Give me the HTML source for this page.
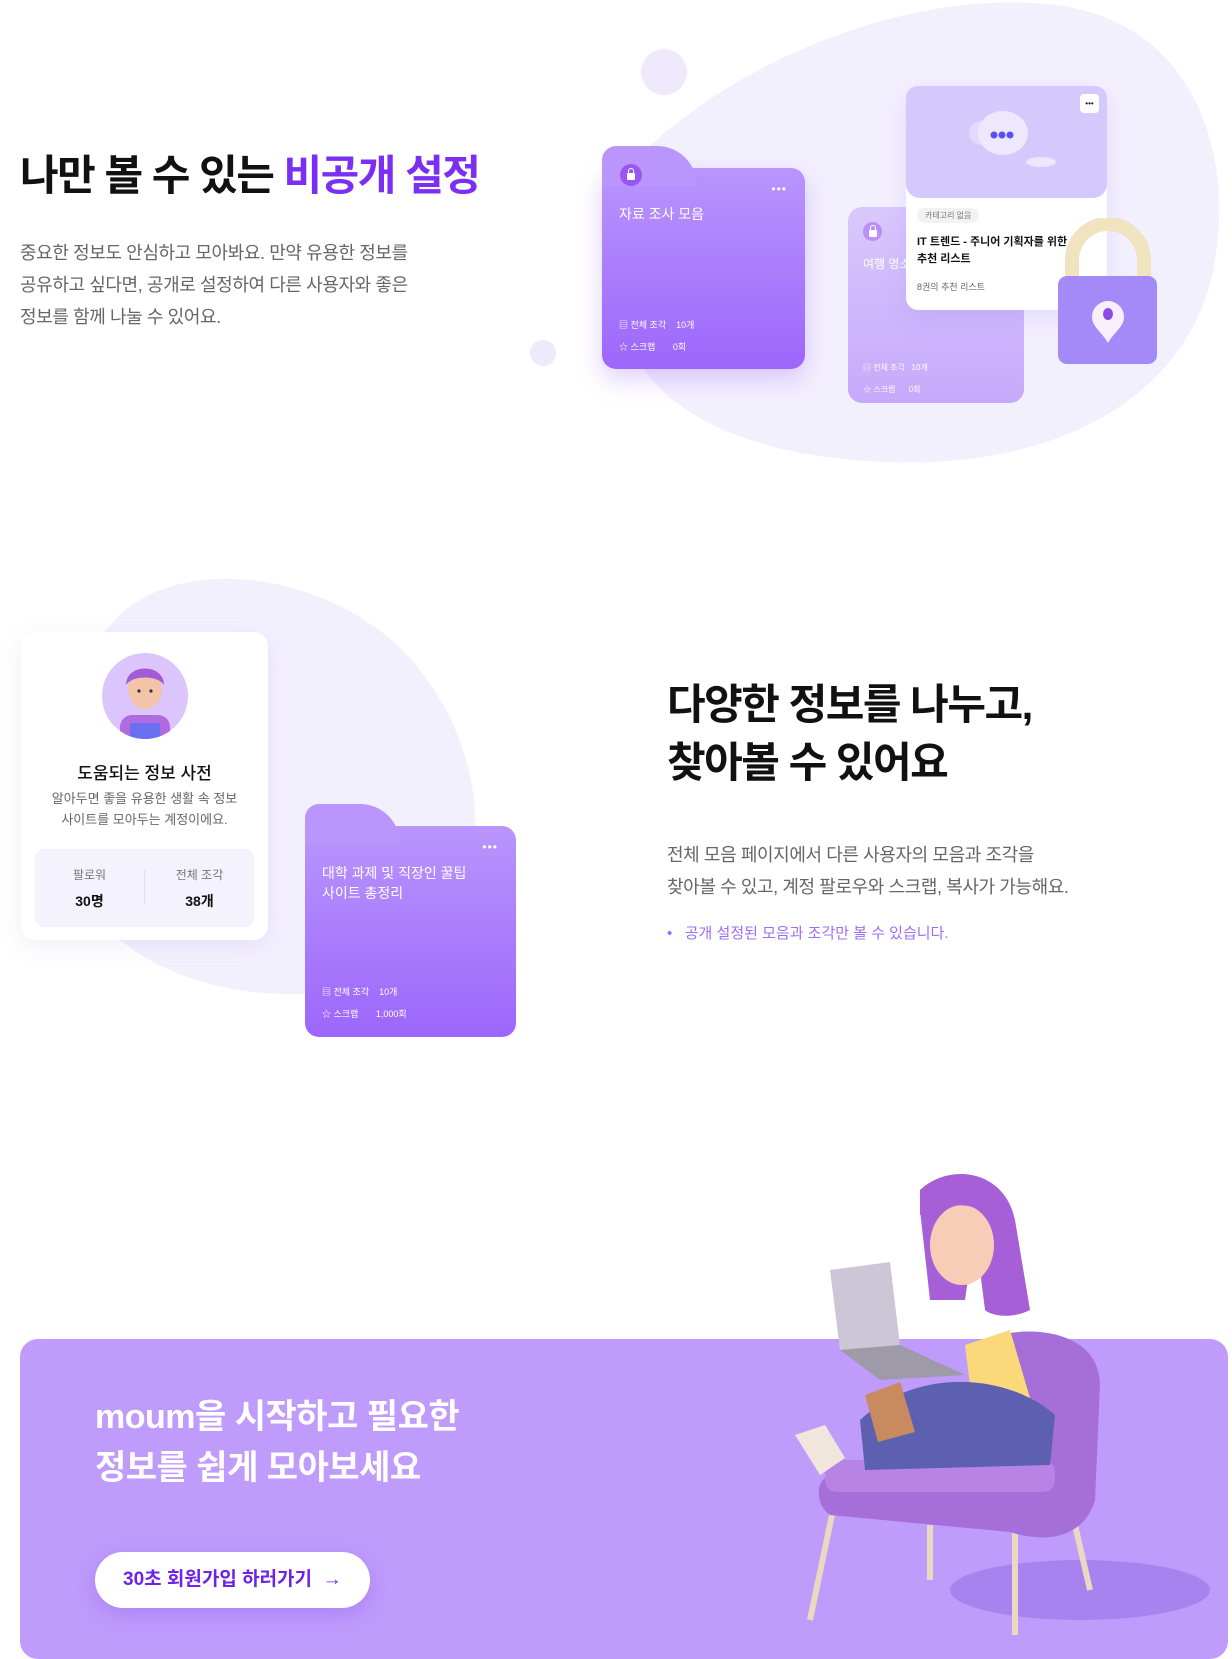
<!DOCTYPE html>
<html><head><meta charset="utf-8"><style>
*{margin:0;padding:0;box-sizing:border-box}
body{width:1232px;height:1645px;position:relative;overflow:hidden;background:#fff;font-family:"Liberation Sans","Noto Sans CJK KR",sans-serif;color:#111}
.a{position:absolute}
.h1{font-size:42px;font-weight:700;letter-spacing:-1.5px;line-height:58px}
.p{font-size:18px;color:#666;line-height:32px;letter-spacing:-0.4px}
.folder{position:absolute;border-radius:14px;background:linear-gradient(180deg,#b995fc,#9d66fb);color:#fff}
.folder .tab{position:absolute;left:0;top:-22px;width:95px;height:40px;border-radius:14px 14px 0 0;background:#b995fc}
.lock{position:absolute;width:22px;height:22px;border-radius:50%;background:#9a55f5;display:flex;align-items:center;justify-content:center}
.lock i{width:8px;height:7px;background:#fff;border-radius:1px;position:relative;margin-top:3px}
.lock i:before{content:"";position:absolute;left:1px;top:-5px;width:4px;height:5px;border:1.5px solid #fff;border-bottom:none;border-radius:3px 3px 0 0}
.meta{font-size:10px;line-height:22px}
</style></head><body>
<!-- top blob -->
<svg class="a" style="left:0;top:0" width="1232" height="470"><path d="M645 150 C765 40 935 -10 1055 5 C1185 20 1235 140 1215 260 C1195 390 1065 470 885 462 C765 457 655 422 625 332 C605 262 595 200 645 150Z" fill="#f3f0fe"/><circle cx="664" cy="72" r="23" fill="#efe9fd"/><circle cx="543" cy="353" r="13" fill="#efe9fd"/></svg>
<div class="a h1" style="left:20px;top:147px">나만 볼 수 있는 <span style="color:#7b2ff2">비공개 설정</span></div>
<div class="a p" style="left:20px;top:237px">중요한 정보도 안심하고 모아봐요. 만약 유용한 정보를<br>공유하고 싶다면, 공개로 설정하여 다른 사용자와 좋은<br>정보를 함께 나눌 수 있어요.</div>

<!-- back folder -->
<div class="folder" style="left:848px;top:207px;width:176px;height:196px;background:linear-gradient(180deg,#d8c6fd,#c4a6fb);opacity:.95">
<div class="lock" style="left:15px;top:15px;width:19px;height:19px;background:#b68af8"><i></i></div>
<div class="a" style="left:15px;top:48px;font-size:12px">여행 명소</div>
<div class="a meta" style="left:15px;top:150px;font-size:8px">▤ 전체 조각 &nbsp; 10개<br>☆ 스크랩 &nbsp;&nbsp;&nbsp;&nbsp; 0회</div></div>
<!-- front folder -->
<div class="folder" style="left:602px;top:168px;width:203px;height:201px;box-shadow:0 10px 25px rgba(150,100,250,.3)">
<div class="tab" style="top:-22px;width:95px;border-radius:14px 40px 0 0"></div>
<div class="lock" style="left:18px;top:-4px"><i></i></div>
<div class="a" style="right:18px;top:14px;font-size:12px;letter-spacing:1px">•••</div>
<div class="a" style="left:17px;top:36px;font-size:14px">자료 조사 모음</div>
<div class="a meta" style="left:17px;top:146px;font-size:9px">▤ 전체 조각 &nbsp;&nbsp; 10개<br>☆ 스크랩 &nbsp;&nbsp;&nbsp;&nbsp;&nbsp; 0회</div></div>
<!-- white card -->
<div class="a" style="left:906px;top:86px;width:201px;height:224px;background:#fff;border-radius:12px;box-shadow:0 8px 24px rgba(140,100,240,.15)">
<div style="height:112px;background:#d5c8fd;border-radius:12px 12px 14px 14px;position:relative">
<div class="a" style="right:8px;top:8px;width:19px;height:19px;background:#fff;border-radius:4px;font-size:8px;text-align:center;line-height:19px">•••</div>
<svg class="a" style="left:60px;top:25px" width="95" height="65"><ellipse cx="15" cy="22" rx="12" ry="12" fill="#e3dafe"/><ellipse cx="37" cy="22" rx="25" ry="22" fill="#eee8ff"/><circle cx="28" cy="24" r="3.5" fill="#5a4ef5"/><circle cx="36" cy="24" r="3.5" fill="#5a4ef5"/><circle cx="44" cy="24" r="3.5" fill="#5a4ef5"/><ellipse cx="75" cy="51" rx="15" ry="5" fill="#ece6ff"/></svg></div>
<div class="a" style="left:11px;top:122px;background:#f2f2f2;border-radius:10px;padding:2px 8px;font-size:8px;color:#777">카테고리 없음</div>
<div class="a" style="left:11px;top:148px;font-size:11px;line-height:17px;font-weight:600">IT 트렌드 - 주니어 기획자를 위한 도<br>추천 리스트</div>
<div class="a" style="left:11px;top:194px;font-size:9px;color:#666">8권의 추천 리스트</div></div>
<!-- padlock -->
<svg class="a" style="left:1053px;top:218px" width="110" height="150"><path d="M19 74 V42 A36 36 0 0 1 91 42 V74" fill="none" stroke="#f0e3bf" stroke-width="14"/><rect x="5" y="58" width="99" height="88" rx="9" fill="#a48af9"/><path d="M55 83 a16 16 0 0 1 16 16 c0 10-10 15-16 26 c-6-11-16-16-16-26 a16 16 0 0 1 16-16z" fill="#f8eefc"/><ellipse cx="55" cy="96" rx="5" ry="6" fill="#8a4ce8"/></svg>

<!-- middle blob -->
<svg class="a" style="left:0;top:570px" width="520" height="450"><path d="M125 40 C200 -20 350 10 420 100 C490 190 490 300 440 370 C390 430 260 440 170 400 C90 365 55 300 55 225 C55 150 75 85 125 40Z" fill="#f3f0fe"/></svg>
<div class="a" style="left:21px;top:632px;width:247px;height:308px;background:#fff;border-radius:14px;box-shadow:0 6px 24px rgba(120,100,200,.1)">
<div class="a" style="left:81px;top:21px;width:86px;height:86px;border-radius:50%;background:#dcc5fd;overflow:hidden">
<svg width="86" height="86"><rect x="18" y="62" width="50" height="30" rx="12" fill="#b06be0"/><rect x="28" y="70" width="30" height="20" fill="#6a6ef0"/><ellipse cx="43" cy="36" rx="17" ry="20" fill="#f3c4a8"/><path d="M24 32 C24 10 62 10 62 32 C56 22 30 22 24 32Z" fill="#a25bd8"/><circle cx="37" cy="38" r="1.6" fill="#333"/><circle cx="49" cy="38" r="1.6" fill="#333"/></svg></div>
<div class="a" style="left:0;width:247px;top:127px;text-align:center;font-size:17px;font-weight:500">도움되는 정보 사전</div>
<div class="a" style="left:0;width:247px;top:156px;text-align:center;font-size:13px;color:#666;line-height:21px">알아두면 좋을 유용한 생활 속 정보<br>사이트를 모아두는 계정이에요.</div>
<div class="a" style="left:14px;top:217px;width:219px;height:78px;background:#f4f2fc;border-radius:9px">
<div class="a" style="left:109px;top:21px;width:1px;height:35px;background:#e2def0"></div>
<div class="a" style="left:0;width:109px;top:17px;text-align:center;font-size:12px;color:#777">팔로워</div>
<div class="a" style="left:0;width:109px;top:42px;text-align:center;font-size:14px;font-weight:700">30명</div>
<div class="a" style="left:110px;width:109px;top:17px;text-align:center;font-size:12px;color:#777">전체 조각</div>
<div class="a" style="left:110px;width:109px;top:42px;text-align:center;font-size:14px;font-weight:700">38개</div></div></div>
<div class="folder" style="left:305px;top:826px;width:211px;height:211px">
<div class="tab" style="width:95px;border-radius:14px 40px 0 0;top:-22px"></div>
<div class="a" style="right:18px;top:14px;font-size:12px;letter-spacing:1px">•••</div>
<div class="a" style="left:17px;top:37px;font-size:14px;line-height:20px">대학 과제 및 직장인 꿀팁<br>사이트 총정리</div>
<div class="a meta" style="left:17px;top:155px;font-size:9px">▤ 전체 조각 &nbsp;&nbsp; 10개<br>☆ 스크랩 &nbsp;&nbsp;&nbsp;&nbsp;&nbsp; 1,000회</div></div>
<div class="a h1" style="left:667px;top:676px">다양한 정보를 나누고,<br>찾아볼 수 있어요</div>
<div class="a p" style="left:667px;top:839px">전체 모음 페이지에서 다른 사용자의 모음과 조각을<br>찾아볼 수 있고, 계정 팔로우와 스크랩, 복사가 가능해요.</div>
<div class="a" style="left:667px;top:922px;font-size:15px;color:#a06cf5">•&nbsp;&nbsp; 공개 설정된 모음과 조각만 볼 수 있습니다.</div>

<!-- banner -->
<div class="a" style="left:20px;top:1339px;width:1208px;height:320px;background:#bf9bfc;border-radius:18px"></div>
<div class="a" style="left:95px;top:1392px;font-size:34px;font-weight:700;color:#fff;line-height:51px;letter-spacing:-0.5px">moum을 시작하고 필요한<br>정보를 쉽게 모아보세요</div>
<div class="a" style="left:95px;top:1552px;width:275px;height:56px;background:#fff;border-radius:28px;box-shadow:0 6px 20px rgba(120,60,230,.25);color:#6d24e6;font-size:19px;font-weight:700;line-height:56px;padding-left:28px">30초 회원가입 하러가기 &nbsp;→</div>
<!-- illustration -->
<svg class="a" style="left:770px;top:1170px" width="460" height="475">
<ellipse cx="310" cy="420" rx="130" ry="30" fill="#9a72e6" opacity=".6"/>
<path d="M40 450 L62 345 M245 465 L245 355 M160 410 L160 355 M320 420 L305 355" stroke="#ead9c0" stroke-width="6"/>
<path d="M230 165 C270 155 330 165 330 215 L325 330 C315 365 280 375 240 362 L60 345 C45 335 45 310 60 305 L200 295 Z" fill="#a66ed9"/>
<rect x="55" y="290" width="230" height="32" rx="12" fill="#b784e6"/>
<path d="M195 175 L240 160 L265 245 L205 255Z" fill="#fbd97a"/>
<path d="M90 250 C150 195 240 205 285 245 L280 295 L95 300 Z" fill="#5d5fb0"/>
<path d="M25 265 L50 305 L75 288 L55 255Z" fill="#f0e6dc"/>
<path d="M95 225 L130 212 L145 262 L108 272Z" fill="#c88b5f"/>
<path d="M150 20 C180 -8 235 0 245 50 L260 140 C240 150 220 145 215 140 L205 60 L195 130 L160 130 L150 40Z" fill="#a65fd6"/>
<ellipse cx="192" cy="75" rx="32" ry="40" fill="#f7cdb8"/>
<path d="M150 40 C170 0 250 10 240 60 C220 30 170 30 150 45Z" fill="#a65fd6"/>
<path d="M60 100 L120 92 L130 175 L70 180Z" fill="#cdc6d6"/>
<path d="M70 180 L130 175 L195 205 L110 210Z" fill="#9f9aa8"/>
</svg>
</body></html>
